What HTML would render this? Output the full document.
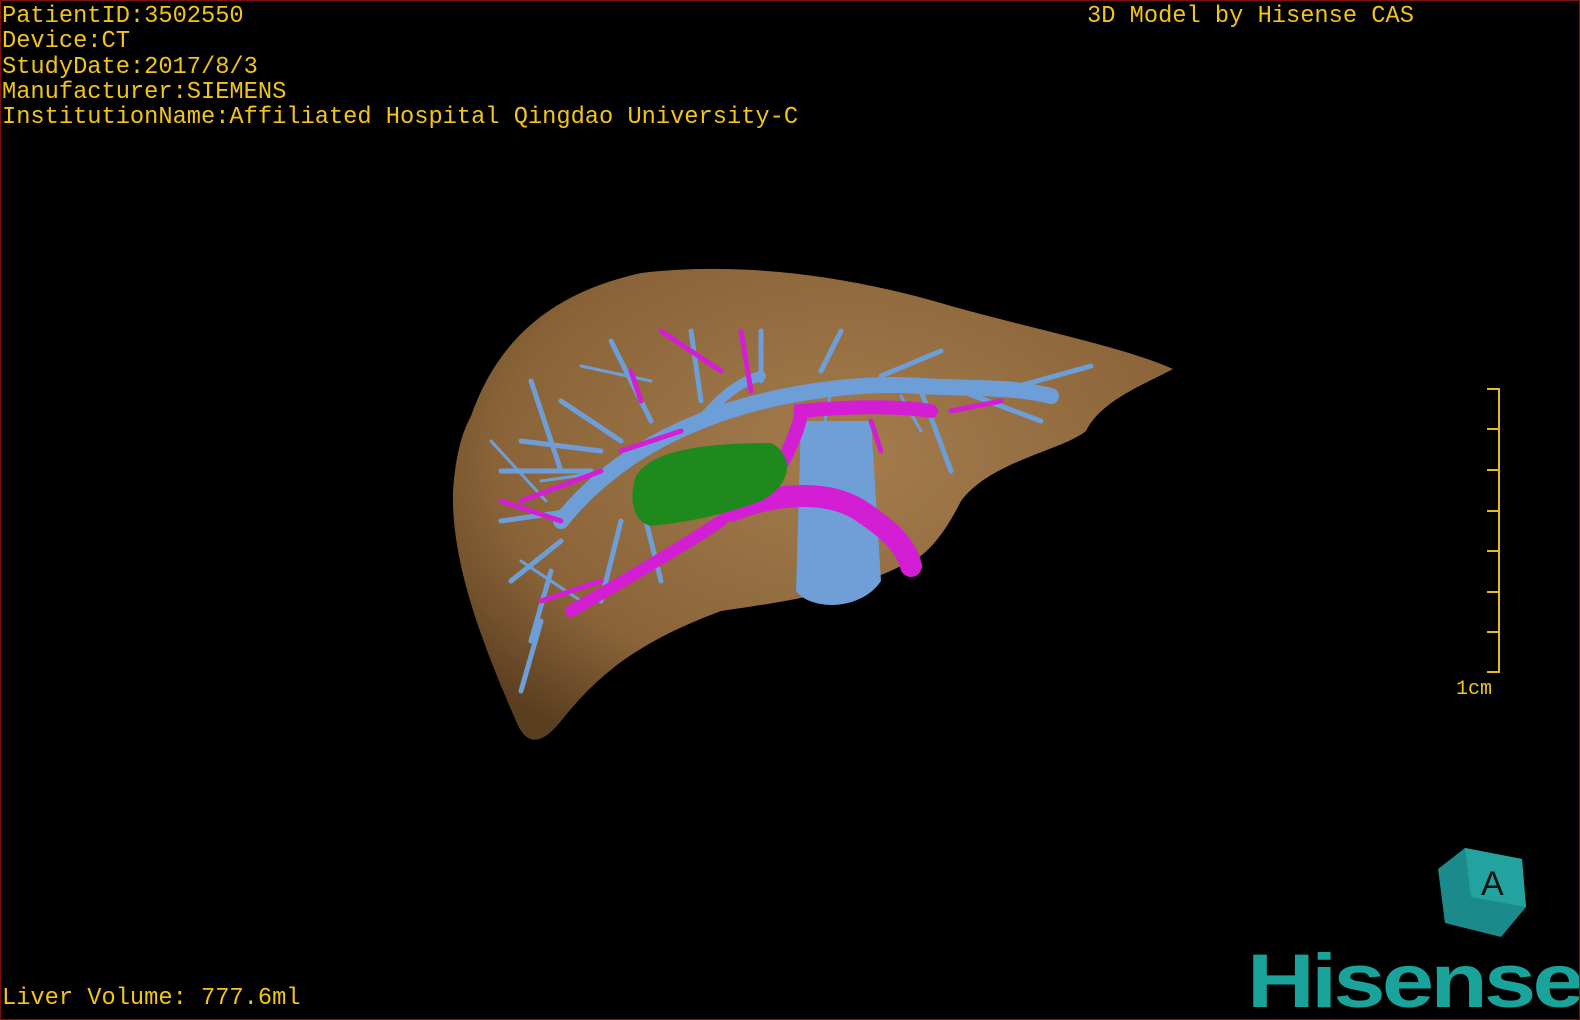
<!DOCTYPE html>
<html><head><meta charset="utf-8"><style>
html,body{margin:0;padding:0;background:#000;}
#c{position:relative;width:1580px;height:1020px;background:#000;overflow:hidden;box-sizing:border-box;border:1px solid #7a1010;}
.t{position:absolute;font-family:"Liberation Mono",monospace;font-size:23.7px;color:#f2c418;line-height:25.3px;white-space:pre;}
</style></head><body><div id="c">
<div class="t" style="left:1px;top:3px">PatientID:3502550
Device:CT
StudyDate:2017/8/3
Manufacturer:SIEMENS
InstitutionName:Affiliated Hospital Qingdao University-C</div>
<div class="t" style="left:1086px;top:3px">3D Model by Hisense CAS</div>
<div class="t" style="left:1px;top:985px">Liver Volume: 777.6ml</div>
<div class="t" style="left:1455px;top:676px;font-size:20px">1cm</div>
<svg width="1580" height="1020" style="position:absolute;left:0;top:0">
<defs>
<radialGradient id="lg" cx="0.55" cy="0.4" r="0.7"><stop offset="0" stop-color="#a47c4e"/><stop offset="0.7" stop-color="#8a6438"/><stop offset="1" stop-color="#5a3e20"/></radialGradient>
</defs>
<path d="M470,415 C500,330 560,290 640,272 C740,260 850,275 950,305 C1040,330 1120,345 1172,368 C1140,385 1100,400 1085,430 C1060,450 990,460 960,500 C940,540 920,560 900,565 C850,590 790,600 720,610 C640,640 600,670 560,720 C540,745 525,745 515,720 C480,640 450,560 452,490 C455,450 462,430 470,415 Z" fill="url(#lg)"/>
<g fill="none" stroke="#6e9ed8" stroke-linecap="round">
<path d="M560,520 C600,470 650,440 700,420 C760,395 850,380 920,385 C970,388 1010,385 1050,395" stroke-width="16"/>
<path d="M700,420 C720,395 740,380 760,375" stroke-width="10"/>
<path d="M600,450 L520,440 M590,470 L500,470 M570,510 L500,520 M560,540 L510,580 M550,570 L530,640 M540,620 L520,690 M620,440 L560,400 M650,420 L610,340 M700,400 L690,330 M760,380 L760,330 M820,370 L840,330 M880,375 L940,350 M920,390 L950,470 M960,390 L1040,420 M1000,390 L1090,365 M620,520 L600,600 M640,500 L660,580 M560,470 L530,380" stroke-width="5"/>
<path d="M545,500 L490,440 M580,600 L520,560 M610,470 L540,480 M900,395 L920,430 M830,390 L820,440 M650,380 L580,365" stroke-width="3"/>
</g>
<path d="M800,420 L870,420 L880,580 C860,610 810,610 795,590 Z" fill="#6f9fd6"/>
<g fill="none" stroke="#d41ed4" stroke-linecap="round">
<path d="M730,510 C780,490 830,490 860,510 C890,530 905,545 910,565" stroke-width="22"/>
<path d="M770,480 C790,450 800,420 800,410 C850,405 900,405 930,410" stroke-width="14"/>
<path d="M720,520 C690,540 640,570 570,610" stroke-width="12"/>
<path d="M640,400 L630,370 M680,430 L620,450 M600,470 L520,500 M560,520 L500,500 M600,580 L540,600 M950,410 L1000,400 M870,420 L880,450 M740,330 L750,390 M720,370 L660,330" stroke-width="5"/>
</g>
<path d="M635,475 C650,450 700,442 770,442 C795,455 790,485 760,500 C720,515 680,522 650,525 C630,520 628,495 635,475 Z" fill="#1e8a1e"/>
<g stroke="#e8b820" stroke-width="2" fill="none">
<path d="M1498,387 L1498,672"/>
<path d="M1486,388 H1498 M1486,428 H1498 M1486,469 H1498 M1486,510 H1498 M1486,550 H1498 M1486,591 H1498 M1486,631 H1498 M1486,671 H1498"/>
</g>
<g>
<polygon points="1437,868 1464,847 1521,858 1525,906 1500,936 1444,922" fill="#1a8a8a"/>
<polygon points="1464,847 1521,858 1525,906 1470,896" fill="#23a3a0"/>
<text x="1480" y="894" font-family="Liberation Sans,sans-serif" font-size="34" fill="#111">A</text>
</g>
<text x="1246" y="1006" font-family="Liberation Sans,sans-serif" font-weight="bold" font-size="76" fill="#1aa39a" letter-spacing="-3" textLength="334" lengthAdjust="spacingAndGlyphs">Hisense</text>
</svg>
</div></body></html>
